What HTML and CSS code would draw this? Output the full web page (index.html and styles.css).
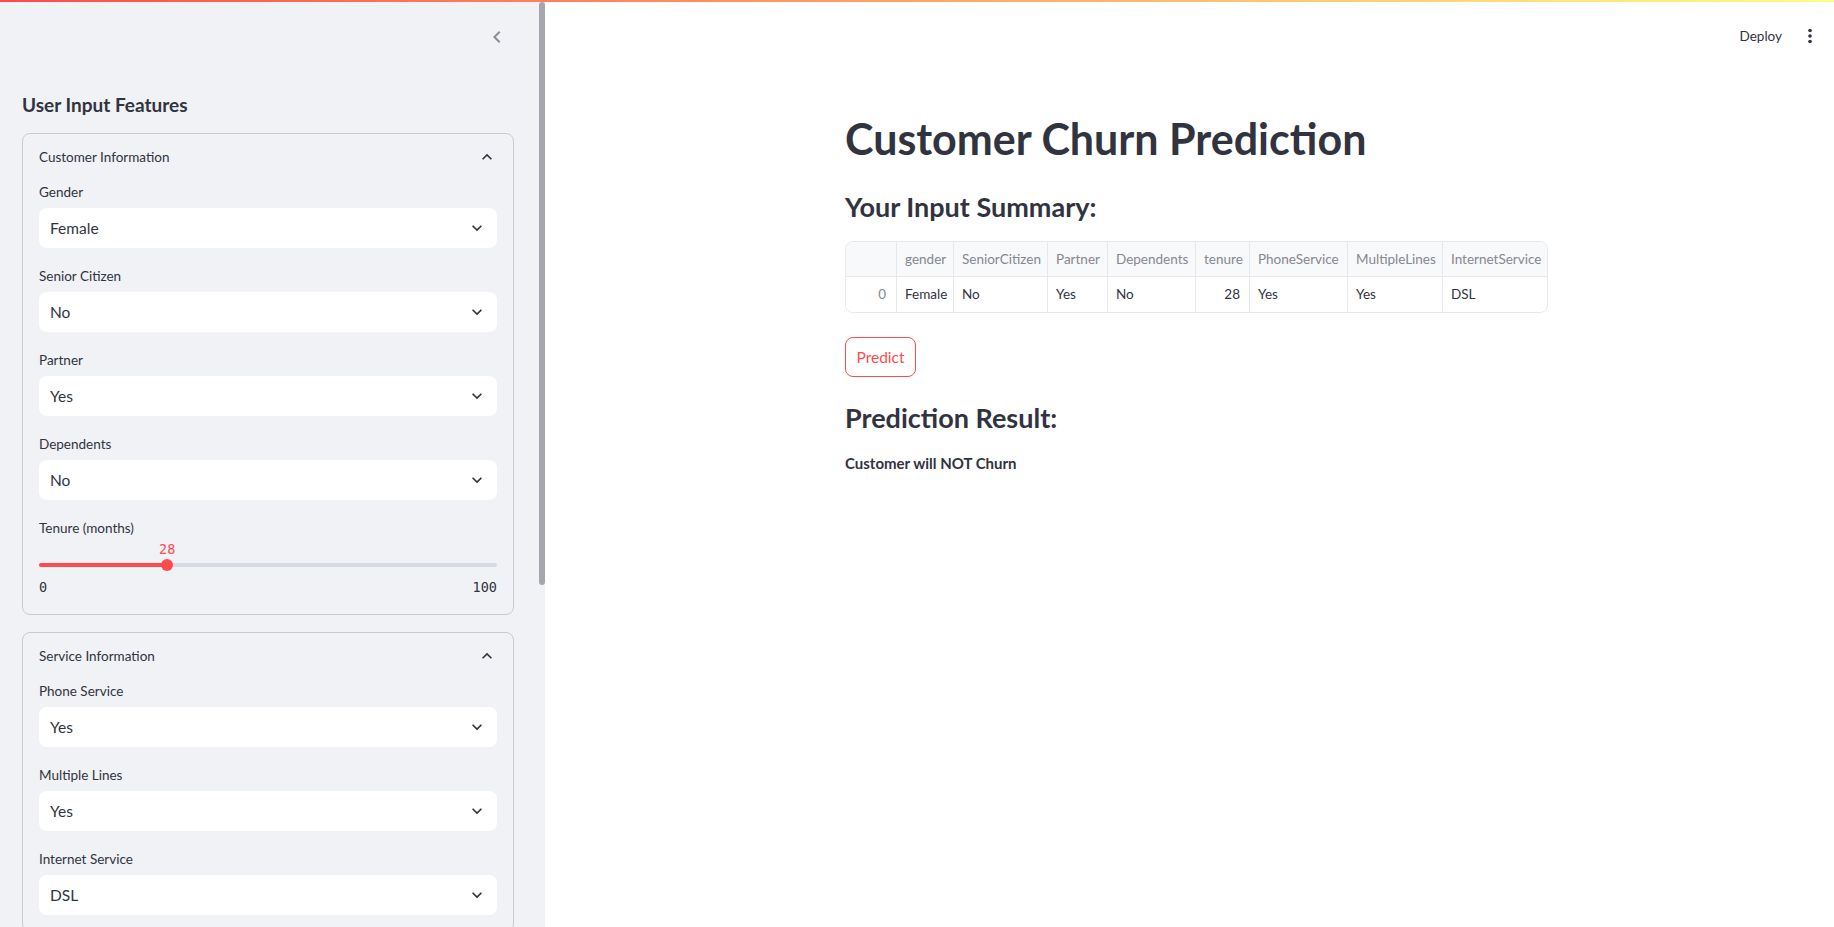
FILE: index.html
```html
<!DOCTYPE html>
<html lang="en">
<head>
<meta charset="utf-8">
<title>Customer Churn Prediction</title>
<link rel="stylesheet" href="styles.css">
</head>
<body>
<div class="decoration"></div>
<aside class="sidebar">
  <div class="sb-inner">
    <div class="sb-top">
      <svg class="collapse" viewBox="0 0 24 24" width="24" height="24"><path d="M15.41 7.41L14 6l-6 6 6 6 1.41-1.41L10.83 12z"/></svg>
    </div>
    <h2 class="sb-title">User Input Features</h2>
    <div class="expanders">
      <section class="expander">
        <div class="exp-head">
          <span>Customer Information</span>
          <svg viewBox="0 0 24 24" width="20" height="20"><path d="M12 8l-6 6 1.41 1.41L12 10.83l4.59 4.58L18 14z"/></svg>
        </div>
        <div class="exp-body">
          <div class="widget">
            <label class="wlabel">Gender</label>
            <div class="select"><span>Female</span><svg viewBox="0 0 24 24" width="20" height="20"><path d="M16.59 8.59L12 13.17 7.41 8.59 6 10l6 6 6-6z"/></svg></div>
          </div>
          <div class="widget">
            <label class="wlabel">Senior Citizen</label>
            <div class="select"><span>No</span><svg viewBox="0 0 24 24" width="20" height="20"><path d="M16.59 8.59L12 13.17 7.41 8.59 6 10l6 6 6-6z"/></svg></div>
          </div>
          <div class="widget">
            <label class="wlabel">Partner</label>
            <div class="select"><span>Yes</span><svg viewBox="0 0 24 24" width="20" height="20"><path d="M16.59 8.59L12 13.17 7.41 8.59 6 10l6 6 6-6z"/></svg></div>
          </div>
          <div class="widget">
            <label class="wlabel">Dependents</label>
            <div class="select"><span>No</span><svg viewBox="0 0 24 24" width="20" height="20"><path d="M16.59 8.59L12 13.17 7.41 8.59 6 10l6 6 6-6z"/></svg></div>
          </div>
          <div class="widget">
            <label class="wlabel">Tenure (months)</label>
            <div class="slider">
              <div class="track" style="background:linear-gradient(to right,#ff4b4b 28%,#d6dae3 28%)"></div>
              <div class="thumb-value" style="left:28%">28</div>
              <div class="thumb" style="left:calc(28% - 6px)"></div>
            </div>
            <div class="minmax"><span>0</span><span>100</span></div>
          </div>
        </div>
      </section>
      <section class="expander">
        <div class="exp-head">
          <span>Service Information</span>
          <svg viewBox="0 0 24 24" width="20" height="20"><path d="M12 8l-6 6 1.41 1.41L12 10.83l4.59 4.58L18 14z"/></svg>
        </div>
        <div class="exp-body">
          <div class="widget">
            <label class="wlabel">Phone Service</label>
            <div class="select"><span>Yes</span><svg viewBox="0 0 24 24" width="20" height="20"><path d="M16.59 8.59L12 13.17 7.41 8.59 6 10l6 6 6-6z"/></svg></div>
          </div>
          <div class="widget">
            <label class="wlabel">Multiple Lines</label>
            <div class="select"><span>Yes</span><svg viewBox="0 0 24 24" width="20" height="20"><path d="M16.59 8.59L12 13.17 7.41 8.59 6 10l6 6 6-6z"/></svg></div>
          </div>
          <div class="widget">
            <label class="wlabel">Internet Service</label>
            <div class="select"><span>DSL</span><svg viewBox="0 0 24 24" width="20" height="20"><path d="M16.59 8.59L12 13.17 7.41 8.59 6 10l6 6 6-6z"/></svg></div>
          </div>
        </div>
      </section>
    </div>
  </div>
  <div class="sb-scroll"></div>
</aside>
<main class="main">
  <header class="topbar">
    <span class="deploy">Deploy</span>
    <svg class="kebab" viewBox="0 0 20 20" width="20" height="20"><circle cx="10" cy="4.5" r="1.8"/><circle cx="10" cy="10" r="1.8"/><circle cx="10" cy="15.5" r="1.8"/></svg>
  </header>
  <div class="content">
    <div class="block">
      <h1 class="title">Customer Churn Prediction</h1>
      <h3 class="subhead">Your Input Summary:</h3>
      <div class="table">
        <div class="cell head"></div>
        <div class="cell head">gender</div>
        <div class="cell head">SeniorCitizen</div>
        <div class="cell head">Partner</div>
        <div class="cell head">Dependents</div>
        <div class="cell head">tenure</div>
        <div class="cell head">PhoneService</div>
        <div class="cell head">MultipleLines</div>
        <div class="cell head last">InternetService</div>
        <div class="cell idx">0</div>
        <div class="cell">Female</div>
        <div class="cell">No</div>
        <div class="cell">Yes</div>
        <div class="cell">No</div>
        <div class="cell num">28</div>
        <div class="cell">Yes</div>
        <div class="cell">Yes</div>
        <div class="cell last">DSL</div>
      </div>
      <button class="btn">Predict</button>
      <h3 class="subhead result-head">Prediction Result:</h3>
      <p class="result">Customer will NOT Churn</p>
    </div>
  </div>
</main>
</body>
</html>
```
FILE: styles.css
```css
* { box-sizing: border-box; }
html, body { margin: 0; padding: 0; }
body {
  font-family: Lato, "Noto Sans", sans-serif;
  color: #31333f;
  display: flex;
  height: 100vh;
  overflow: hidden;
  background: #ffffff;
}
.decoration {
  position: fixed;
  top: 0; left: 0; right: 0;
  height: 2px;
  background: linear-gradient(90deg, #ff4b4b, #fffd80);
  z-index: 10;
}

/* Sidebar */
.sidebar {
  position: relative;
  flex: 0 0 545px;
  width: 545px;
  height: 100vh;
  background: #f0f2f6;
  overflow: hidden;
}
.sb-inner { padding: 0 31px 0 22px; }
.sb-top {
  height: 74px;
  display: flex;
  align-items: center;
  justify-content: flex-end;
  padding-right: 5px;
}
.collapse { fill: #8a8c96; }
.sb-title {
  margin: 16px 0 13px;
  font-size: 19px;
  line-height: 30px;
  font-weight: 700;
}
.sb-scroll {
  position: absolute;
  top: 2px;
  right: 0;
  width: 6px;
  height: 583px;
  border-radius: 3px;
  background: #a6a6ae;
}
.expanders { display: flex; flex-direction: column; gap: 17px; }
.expander {
  border: 1px solid #c9cbd1;
  border-radius: 8px;
}
.exp-head {
  display: flex;
  align-items: center;
  justify-content: space-between;
  padding: 12px 16px;
  height: 46px;
  font-size: 13.5px;
  line-height: 22px;
}
.exp-head svg { fill: #31333f; }
.exp-body {
  padding: 0 16px 16px;
  display: flex;
  flex-direction: column;
  gap: 16px;
}
.widget { display: flex; flex-direction: column; }
.wlabel {
  display: block;
  font-size: 13.5px;
  line-height: 24px;
  height: 24px;
  margin-bottom: 4px;
}
.select {
  height: 40px;
  background: #ffffff;
  border-radius: 8px;
  display: flex;
  align-items: center;
  justify-content: space-between;
  padding: 0 10px 0 11px;
  font-size: 15.5px;
}
.select svg { fill: #31333f; }

.slider {
  position: relative;
  height: 32px;
  padding-top: 19px;
}
.track { height: 4px; border-radius: 2px; }
.thumb {
  position: absolute;
  top: 15px;
  width: 12px;
  height: 12px;
  border-radius: 50%;
  background: #ff4b4b;
}
.thumb-value {
  position: absolute;
  top: -2px;
  transform: translateX(-50%);
  font-family: "DejaVu Sans Mono", monospace;
  font-size: 13.5px;
  line-height: 14px;
  color: #ff4b4b;
}
.minmax {
  display: flex;
  justify-content: space-between;
  font-family: "DejaVu Sans Mono", monospace;
  font-size: 13.5px;
  line-height: 22px;
}

/* Main */
.main {
  flex: 1 1 auto;
  display: flex;
  flex-direction: column;
  min-width: 0;
}
.topbar {
  height: 72px;
  display: flex;
  align-items: center;
  justify-content: flex-end;
  gap: 18px;
  padding-right: 14px;
}
.deploy { font-size: 13.5px; line-height: 20px; }
.kebab { fill: #31333f; }
.content {
  display: flex;
  justify-content: center;
  padding-left: 15px;
}
.block { width: 704px; padding-top: 42px; }
.title {
  margin: 0 0 26px;
  font-size: 43px;
  line-height: 50px;
  font-weight: 700;
}
.subhead {
  margin: 0 0 17px;
  font-size: 27px;
  line-height: 34px;
  font-weight: 700;
}
.table {
  display: grid;
  grid-template-columns: 51px 57px 94px 60px 88px 54px 98px 95px 105px;
  width: 703px;
  border: 1px solid #e6e8ec;
  border-radius: 8px;
  overflow: hidden;
  font-size: 13.5px;
}
.cell {
  height: 35px;
  line-height: 34px;
  padding: 0 8px;
  border-right: 1px solid #e6e8ec;
  white-space: nowrap;
  overflow: hidden;
  background: #ffffff;
}
.cell.last { border-right: none; }
.cell.head {
  background: #f8f9fb;
  color: #86878f;
  border-bottom: 1px solid #e6e8ec;
}
.cell.idx { text-align: right; color: #86878f; padding-right: 10px; }
.cell.num { text-align: right; padding-right: 9px; }
.btn {
  display: block;
  margin: 24px 0 24px;
  width: 71px;
  height: 40px;
  padding: 0;
  border: 1px solid #ff4b4b;
  border-radius: 8px;
  background: #ffffff;
  color: #ff4b4b;
  font-family: Lato, "Noto Sans", sans-serif;
  font-size: 15.5px;
}
.result-head { margin-bottom: 16px; }
.result {
  margin: 0;
  font-size: 15px;
  line-height: 24px;
  font-weight: 700;
}
```
